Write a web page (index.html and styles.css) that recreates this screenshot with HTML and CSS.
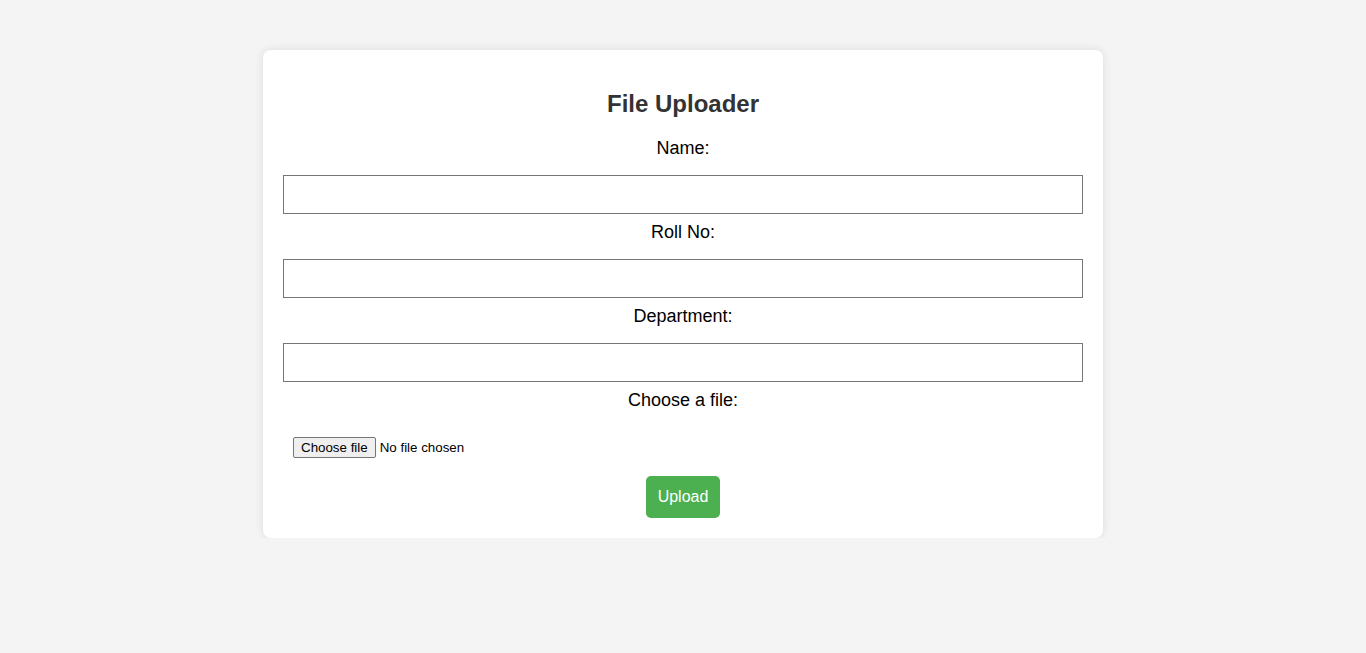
FILE: index.html
```html
<!DOCTYPE html>
<html lang="en">
<head>
<meta charset="utf-8">
<title>File Uploader</title>
<link rel="stylesheet" href="styles.css">
</head>
<body>
<div class="card">
  <h2 class="title">File Uploader</h2>
  <form class="form">
    <label class="label" for="name">Name:</label>
    <input class="text-input" type="text" id="name">
    <label class="label" for="roll">Roll No:</label>
    <input class="text-input" type="text" id="roll">
    <label class="label" for="dept">Department:</label>
    <input class="text-input" type="text" id="dept">
    <label class="label" for="file">Choose a file:</label>
    <div class="file-row">
      <input class="file-native" type="file" id="file">
      <label class="file-btn" for="file">Choose file</label>
      <span class="file-status">No file chosen</span>
    </div>
    <button class="upload-btn" type="button">Upload</button>
  </form>
</div>
</body>
</html>
```
FILE: styles.css
```css
html, body {
  margin: 0;
  padding: 0;
}
body {
  background: #f4f4f4;
  font-family: "Liberation Sans", Arial, sans-serif;
  color: #000;
}
.card {
  box-sizing: border-box;
  width: 840px;
  margin: 50px auto 0;
  padding: 20px;
  background: #fff;
  border-radius: 8px;
  box-shadow: 0 0 10px rgba(0, 0, 0, 0.1);
  text-align: center;
}
.title {
  margin: 20px 0;
  font-size: 24px;
  line-height: 28px;
  font-weight: bold;
  color: #333;
}
.form {
  display: flex;
  flex-direction: column;
  align-items: stretch;
}
.label {
  display: block;
  font-size: 18px;
  line-height: 21px;
  margin-bottom: 8px;
}
.text-input {
  box-sizing: border-box;
  width: 100%;
  height: 39px;
  margin: 8px 0;
  padding: 10px;
  border: 1px solid #767676;
  border-radius: 0;
  font-family: "Liberation Sans", Arial, sans-serif;
  font-size: 14px;
  background: #fff;
}
.file-row {
  box-sizing: border-box;
  height: 41px;
  margin: 8px 0;
  padding: 10px;
  display: flex;
  align-items: center;
  gap: 4px;
  text-align: left;
  font-family: "Liberation Sans", Arial, sans-serif;
  font-size: 13.33px;
}
.file-native {
  display: none;
}
.file-btn {
  box-sizing: border-box;
  height: 21px;
  padding: 0 7px;
  display: flex;
  align-items: center;
  border: 1px solid #767676;
  border-radius: 2px;
  background: #efefef;
  color: #000;
  cursor: default;
}
.file-status {
  color: #000;
}
.upload-btn {
  align-self: center;
  height: 42px;
  padding: 0 12px;
  border: none;
  border-radius: 5px;
  background: #4caf50;
  color: #fff;
  font-family: "Liberation Sans", Arial, sans-serif;
  font-size: 16px;
  cursor: pointer;
}
```
